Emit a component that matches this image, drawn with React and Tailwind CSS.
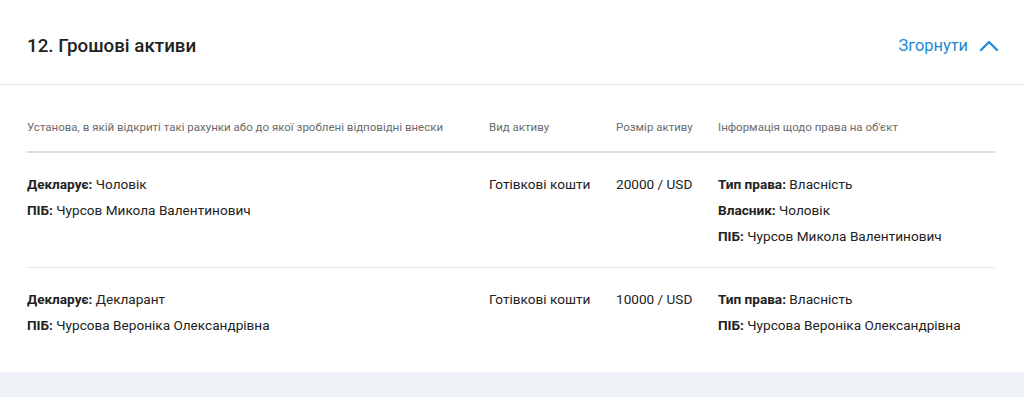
import React from "react";

const rows = [
  {
    declarant: "Чоловік",
    name: "Чурсов Микола Валентинович",
    kind: "Готівкові кошти",
    amount: "20000 / USD",
    rights: [
      ["Тип права:", "Власність"],
      ["Власник:", "Чоловік"],
      ["ПІБ:", "Чурсов Микола Валентинович"],
    ],
  },
  {
    declarant: "Декларант",
    name: "Чурсова Вероніка Олександрівна",
    kind: "Готівкові кошти",
    amount: "10000 / USD",
    rights: [
      ["Тип права:", "Власність"],
      ["ПІБ:", "Чурсова Вероніка Олександрівна"],
    ],
  },
];

const Field = ({ label, value }) => (
  <div>
    <span className="font-bold">{label}</span> {value}
  </div>
);

const App = () => {
  return (
    <div className="min-h-screen bg-[#eef1f6] font-['Roboto',sans-serif] text-[#222]">
      {/* Card */}
      <div className="bg-white">
        {/* Section header */}
        <div className="h-[85px] pt-[8px] flex items-center justify-between px-[27px] border-b border-[#e6e6e6]">
          <h2 className="text-[18.8px] font-medium text-[#222]">12. Грошові активи</h2>
          <button className="flex items-center gap-[11px] text-[16.4px] text-[#1a8ad4] mr-[-2px]">
            Згорнути
            <svg width="20" height="12" viewBox="0 0 20 12" fill="none" stroke="currentColor" strokeWidth="2.2" strokeLinecap="round" strokeLinejoin="round">
              <path d="M2 10 10 2l8 8" />
            </svg>
          </button>
        </div>

        {/* Table */}
        <div className="px-[27px] pr-[29px] pb-[16px]">
          <div className="grid grid-cols-[462px_127px_102px_1fr] text-[11.5px] leading-[16px] text-[#6b6b6b] pt-[34px] pb-[16px] border-b-2 border-[#dcdcdc]">
            <div>Установа, в якій відкриті такі рахунки або до якої зроблені відповідні внески</div>
            <div>Вид активу</div>
            <div>Розмір активу</div>
            <div>Інформація щодо права на об'єкт</div>
          </div>

          {rows.map((r, i) => (
            <div
              key={i}
              className={`grid grid-cols-[462px_127px_102px_1fr] text-[13.6px] leading-[26px] text-[#222] pt-[18px] pb-[18px] ${
                i < rows.length - 1 ? "border-b border-[#e6e6e6]" : ""
              }`}
            >
              <div>
                <Field label="Декларує:" value={r.declarant} />
                <Field label="ПІБ:" value={r.name} />
              </div>
              <div>{r.kind}</div>
              <div>{r.amount}</div>
              <div>
                {r.rights.map(([l, v]) => (
                  <Field key={l} label={l} value={v} />
                ))}
              </div>
            </div>
          ))}
        </div>
      </div>
    </div>
  );
};

export default App;
